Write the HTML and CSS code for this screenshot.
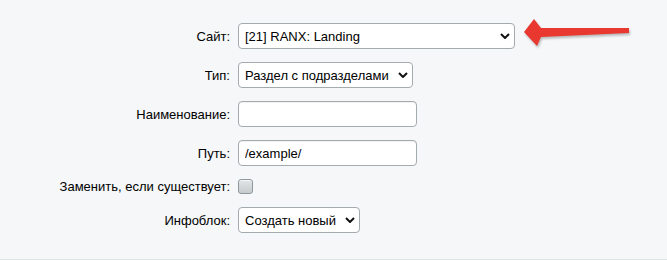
FILE: index.html
```html
<!DOCTYPE html>
<html lang="ru">
<head>
  <meta charset="UTF-8" />
  <title>Новый раздел</title>
  <link rel="stylesheet" href="styles.css">
</head>
<body>

  <!-- Form -->
  <div class="panel">
    <div class="form-grid">
      <label class="form-label" for="site">Сайт:</label>
      <span class="select-wrap">
        <select id="site" class="field select-site">
          <option>[21] RANX: Landing</option>
        </select>
        <svg class="chevron" width="10" height="6" viewBox="0 0 10 6"><path d="M1 1 L5 5 L9 1" fill="none" stroke="#111" stroke-width="2"/></svg>
      </span>

      <label class="form-label" for="type">Тип:</label>
      <span class="select-wrap">
        <select id="type" class="field select-type">
          <option>Раздел с подразделами</option>
        </select>
        <svg class="chevron" width="10" height="6" viewBox="0 0 10 6"><path d="M1 1 L5 5 L9 1" fill="none" stroke="#111" stroke-width="2"/></svg>
      </span>

      <label class="form-label" for="name">Наименование:</label>
      <input id="name" class="field text-field" type="text" value="">

      <label class="form-label" for="path">Путь:</label>
      <input id="path" class="field text-field" type="text" value="/example/">

      <label class="form-label" for="replace">Заменить, если существует:</label>
      <span class="check-cell"><input id="replace" class="checkbox" type="checkbox"></span>

      <label class="form-label" for="iblock">Инфоблок:</label>
      <span class="select-wrap">
        <select id="iblock" class="field select-iblock">
          <option>Создать новый</option>
        </select>
        <svg class="chevron" width="10" height="6" viewBox="0 0 10 6"><path d="M1 1 L5 5 L9 1" fill="none" stroke="#111" stroke-width="2"/></svg>
      </span>
    </div>

    <!-- Red pointer arrow -->
    <svg class="pointer" width="120" height="40" viewBox="520 12 120 40">
      <polygon points="524,32 534,19 541,28 629,28 629,33 541,37 537,46" fill="#e8382f"/>
    </svg>
  </div>

</body>
</html>
```

FILE: styles.css
```css
* {
  margin: 0;
  padding: 0;
  box-sizing: border-box;
}

body {
  font-family: "Liberation Sans", Arial, sans-serif;
  font-size: 13px;
  color: #000;
  background: #f5f7f8;
}

.panel {
  position: relative;
  height: 260px;
  padding-top: 23px;
  border-bottom: 1px solid #dfe6e8;
}

/* Form */
.form-grid {
  display: grid;
  grid-template-columns: 230px auto;
  column-gap: 8px;
  row-gap: 13px;
  align-items: center;
  justify-items: start;
}

.form-label {
  justify-self: end;
  color: #000;
}

.field {
  height: 26px;
  font-family: "Liberation Sans", Arial, sans-serif;
  font-size: 13px;
  color: #000;
  background: #fff;
  border: 1px solid #a3abaf;
  border-radius: 4px;
  outline: none;
}

.text-field {
  width: 179px;
  padding: 0 6px;
  box-shadow: inset 0 1px 1px rgba(0, 0, 0, 0.06);
}

.select-wrap {
  position: relative;
  display: inline-block;
}

.select-wrap select {
  appearance: none;
  -webkit-appearance: none;
  padding: 0 20px 0 6px;
}

.select-site { width: 277px; }
.select-type { width: 175px; }
.select-iblock { width: 122px; }

.chevron {
  position: absolute;
  right: 5px;
  top: 10px;
  pointer-events: none;
}

.check-cell {
  display: flex;
  height: 15px;
}

.checkbox {
  appearance: none;
  -webkit-appearance: none;
  width: 15px;
  height: 15px;
  border: 1px solid #8e979b;
  border-radius: 3px;
  background: linear-gradient(to bottom, #e2e5e6, #c6cbce);
  box-shadow: inset 0 1px 0 #f4f6f7;
}

/* Arrow */
.pointer {
  position: absolute;
  left: 520px;
  top: 12px;
  filter: drop-shadow(1px 2px 1px rgba(0, 0, 0, 0.25));
}
```
